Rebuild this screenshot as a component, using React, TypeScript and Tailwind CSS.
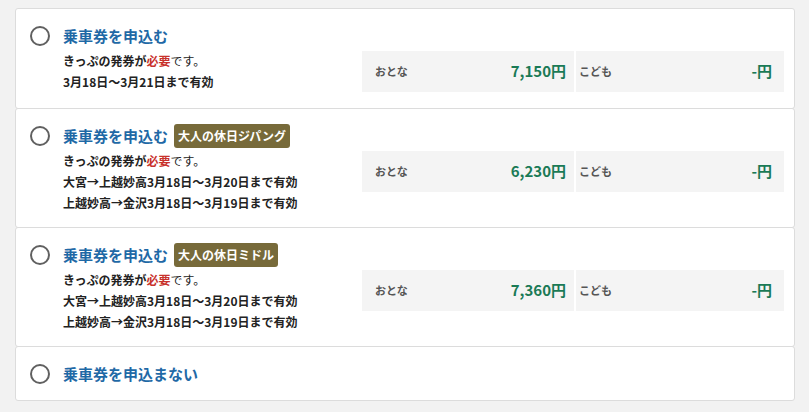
import React from "react";

type Option = {
  id: number;
  title: string;
  badge?: string;
  lines?: string[];
  adult?: string;
  child?: string;
};

const options: Option[] = [
  {
    id: 1,
    title: "乗車券を申込む",
    lines: ["3月18日～3月21日まで有効"],
    adult: "7,150",
    child: "-",
  },
  {
    id: 2,
    title: "乗車券を申込む",
    badge: "大人の休日ジパング",
    lines: ["大宮→上越妙高3月18日～3月20日まで有効", "上越妙高→金沢3月18日～3月19日まで有効"],
    adult: "6,230",
    child: "-",
  },
  {
    id: 3,
    title: "乗車券を申込む",
    badge: "大人の休日ミドル",
    lines: ["大宮→上越妙高3月18日～3月20日まで有効", "上越妙高→金沢3月18日～3月19日まで有効"],
    adult: "7,360",
    child: "-",
  },
  { id: 4, title: "乗車券を申込まない" },
];

function PriceBox({ adult, child }: { adult: string; child: string }) {
  return (
    <div className="flex w-[422px] shrink-0 gap-[2px] h-[41px] mt-px mb-[2px]">
      <div className="flex w-[212px] items-center justify-between bg-[#f4f4f4] pl-[13px] pr-[8px]">
        <span className="text-[11px] font-bold text-[#555]">おとな</span>
        <span className="text-[15px] font-bold text-[#1a7a56]">{adult}円</span>
      </div>
      <div className="flex flex-1 items-center justify-between bg-[#f4f4f4] pl-[3px] pr-[12px]">
        <span className="text-[11px] font-bold text-[#555]">こども</span>
        <span className="text-[15px] font-bold text-[#1a7a56]">{child}円</span>
      </div>
    </div>
  );
}

function OptionCard({ option, first }: { option: Option; first: boolean }) {
  return (
    <div
      className={`flex gap-[13px] rounded-[3px] border border-[#dcdcdc] bg-white pl-[14px] pr-[10px] pt-[15px] pb-[14px] ${
        first ? "" : "-mt-px"
      }`}
    >
      {/* Radio */}
      <div className="flex h-6 items-center">
        <div className="h-5 w-5 rounded-full border-2 border-[#606060]" />
      </div>

      <div className="flex-1">
        <div className="flex h-6 items-center">
          <span className="text-[15px] font-bold leading-6 text-[#1f69a6]">{option.title}</span>
          {option.badge && (
            <span className="ml-[6px] flex h-6 items-center rounded-[3px] bg-[#776a3a] px-[4px] text-[12px] font-bold text-white">
              {option.badge}
            </span>
          )}
        </div>

        {option.lines && (
          <div className="mt-[2px] flex items-start">
            <div className="flex-1 text-[12px] font-bold leading-[21px] text-[#222]">
              <div>
                きっぷの発券が<span className="text-[#c8322c]">必要</span>
                <span className="font-normal">です。</span>
              </div>
              {option.lines.map((line) => (
                <div key={line}>{line}</div>
              ))}
            </div>
            <PriceBox adult={option.adult!} child={option.child!} />
          </div>
        )}
      </div>
    </div>
  );
}

export default function App() {
  return (
    <div className="min-h-[412px] w-[809px] bg-[#f2f2f2] pt-[8px] font-['Noto_Sans_CJK_JP','Noto_Sans',sans-serif]">
      <div className="ml-[15px] w-[780px]">
        {options.map((option, index) => (
          <OptionCard key={option.id} option={option} first={index === 0} />
        ))}
      </div>
    </div>
  );
}
